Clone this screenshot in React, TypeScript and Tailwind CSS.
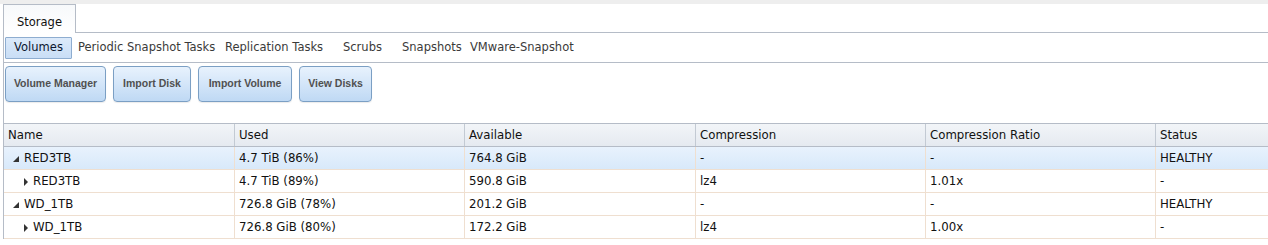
import React from "react";

const cols = ["Name", "Used", "Available", "Compression", "Compression Ratio", "Status"];
const widths = ["w-[231px]", "w-[230px]", "w-[231px]", "w-[230px]", "w-[230px]", "flex-1"];

type Row = { name: string; level: number; expanded: boolean; cells: string[]; selected?: boolean };
const rows: Row[] = [
  { name: "RED3TB", level: 0, expanded: true, cells: ["4.7 TiB (86%)", "764.8 GiB", "-", "-", "HEALTHY"], selected: true },
  { name: "RED3TB", level: 1, expanded: false, cells: ["4.7 TiB (89%)", "590.8 GiB", "lz4", "1.01x", "-"] },
  { name: "WD_1TB", level: 0, expanded: true, cells: ["726.8 GiB (78%)", "201.2 GiB", "-", "-", "HEALTHY"] },
  { name: "WD_1TB", level: 1, expanded: false, cells: ["726.8 GiB (80%)", "172.2 GiB", "lz4", "1.00x", "-"] },
];

function Expando({ expanded }: { expanded: boolean }) {
  if (expanded) {
    return (
      <svg width="6" height="6" viewBox="0 0 6 6" className="mr-[5px]">
        <polygon points="6,0 6,6 0,6" fill="#333" />
      </svg>
    );
  }
  return (
    <svg width="5" height="8" viewBox="0 0 5 8" className="mr-[4px]">
      <polygon points="0,0 4,4 0,8" fill="#333" />
    </svg>
  );
}

export default function App() {
  const subtabs: { label: string; w: string }[] = [
    { label: "Periodic Snapshot Tasks", w: "w-[147px]" },
    { label: "Replication Tasks", w: "w-[118px]" },
    { label: "Scrubs", w: "w-[59px]" },
    { label: "Snapshots", w: "w-[68px]" },
    { label: "VMware-Snapshot", w: "w-[120px]" },
  ];
  const buttons: { label: string; w: string }[] = [
    { label: "Volume Manager", w: "w-[101px]" },
    { label: "Import Disk", w: "w-[78px]" },
    { label: "Import Volume", w: "w-[94px]" },
    { label: "View Disks", w: "w-[73px]" },
  ];
  return (
    <div className="w-[1268px] h-[245px] overflow-hidden bg-white font-['DejaVu_Sans',sans-serif] text-[11.5px] text-[#111]">
      <div className="h-[4px] bg-[#eeeeee]" />
      {/* top tab row */}
      <div className="flex h-[29px]">
        <div className="w-[3px]" />
        <div className="w-[73px] h-[29px] border border-b-0 border-[#b5bcc7] bg-gradient-to-b from-[#f7f9fb] to-white flex items-center justify-center text-[#111] pt-[7px]">
          Storage
        </div>
        <div className="flex-1 border-b border-[#b5bcc7]" />
      </div>
      {/* content panel */}
      <div className="ml-[3px] border-l border-[#b5bcc7]">
        {/* sub tabs */}
        <div className="flex items-center h-[30px] border-b border-[#b5bcc7] pl-[1px]">
          <div className="w-[67px] h-[22px] border border-[#8eadd0] bg-gradient-to-b from-[#dceafa] to-[#c9def6] rounded-[1px] flex items-center justify-center text-[#0c1830] pt-[1px]">
            Volumes
          </div>
          <div className="w-[6px]" />
          {subtabs.map((t) => (
            <div key={t.label} className={`${t.w} whitespace-nowrap text-[#3a3a3a] pt-[1px]`}>
              {t.label}
            </div>
          ))}
        </div>
        {/* buttons */}
        <div className="flex h-[60px] pt-[3px] pl-[1px] gap-[7px]">
          {buttons.map((b) => (
            <div
              key={b.label}
              className={`${b.w} h-[36px] rounded-[4px] border border-[#7b9fc4] bg-gradient-to-b from-[#e8f2fd] to-[#bfd9f4] flex items-center justify-center font-['Liberation_Sans',sans-serif] font-bold text-[10.5px] text-[#505050] shadow-[0_1px_1px_rgba(0,0,0,0.08)]`}
            >
              {b.label}
            </div>
          ))}
        </div>
        {/* grid */}
        <div className="border-t border-[#b5bcc7] text-[11.75px]">
          <div className="flex h-[23px] border-b border-[#b5bcc7] bg-gradient-to-b from-[#f2f5f8] to-[#e5eaf0]">
            {cols.map((c, i) => (
              <div
                key={c}
                className={`${widths[i]} ${i < 5 ? "border-r border-[#c3cad3]" : ""} flex items-center pl-[4px] pt-[1px] text-[#111]`}
              >
                {c}
              </div>
            ))}
          </div>
          {rows.map((r, ri) => (
            <div
              key={ri}
              className={`flex h-[23px] border-b border-[#efdfd0] ${r.selected ? "bg-gradient-to-b from-[#e8f2fd] to-[#d8e9fa]" : "bg-white"}`}
            >
              <div className={`${widths[0]} border-r border-[#efdfd0] flex items-center pt-[2px] ${r.level === 0 ? "pl-[9px]" : "pl-[20px]"}`}>
                <Expando expanded={r.expanded} />
                <span>{r.name}</span>
              </div>
              {r.cells.map((c, ci) => (
                <div
                  key={ci}
                  className={`${widths[ci + 1]} ${ci < 4 ? "border-r border-[#efdfd0]" : ""} flex items-center pl-[4px] pt-[2px]`}
                >
                  {c}
                </div>
              ))}
            </div>
          ))}
        </div>
      </div>
    </div>
  );
}
